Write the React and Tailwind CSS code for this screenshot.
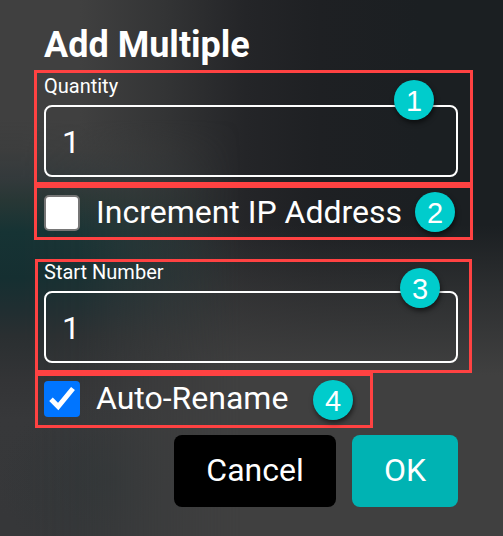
function Badge({ n, className }) {
  return (
    <span
      className={`flex size-10 items-center justify-center rounded-full bg-[#00cccc] pt-[2px] font-['Liberation_Sans',sans-serif] text-[29px] font-normal leading-none text-white shadow-[1px_3px_5px_rgba(0,0,0,0.55)] ${className}`}
    >
      {n}
    </span>
  );
}

function NumberField({ label, gap, badge, badgeClass }) {
  return (
    <label className={`relative flex flex-col ${gap}`}>
      <span className="text-[20px] leading-6">{label}</span>
      <input
        type="text"
        defaultValue="1"
        className="h-[72px] w-[414px] rounded-[8px] border-2 border-white bg-transparent px-4 pt-[2px] text-[32px] leading-none text-white outline-none"
      />
      <Badge n={badge} className={`absolute ${badgeClass}`} />
    </label>
  );
}

export default function App() {
  return (
    <main className="relative isolate h-[536px] w-[503px] overflow-hidden bg-[#404040] bg-[linear-gradient(to_bottom,transparent_225px,rgba(64,64,64,0.5)_295px,#404040_375px),linear-gradient(to_right,#404040_80px,#333435_165px,#242528_245px,#1e2023_320px,#1b1f22_420px)] font-['Roboto',sans-serif] text-[32px] text-white">
      <div className="absolute inset-0 -z-10 bg-[radial-gradient(ellipse_110px_90px_at_110px_480px,rgba(46,52,54,0.8),transparent),linear-gradient(to_bottom,rgba(64,64,64,0)_120px,rgba(58,60,60,0.6)_150px,#343a3c_177px,#283735_200px,#163334_232px,#152f31_278px,#202e31_310px,#2a2f31_336px,#333436_380px,#37383a_420px,#363739_520px)] [mask-image:linear-gradient(to_right,black_20px,rgba(0,0,0,0.88)_80px,rgba(0,0,0,0.45)_150px,transparent_240px)]" />
      <form className="flex flex-col">
        <h1 className="mt-[21px] ml-11 h-[49px] text-[36px] leading-[48px] font-bold">Add Multiple</h1>

        <section className="ml-[34px] h-[115px] w-[439px] border-3 border-[#ff4242] px-[7px] pt-px">
          <NumberField label="Quantity" gap="gap-[7px]" badge="1" badgeClass="left-[350px] top-[6px]" />
        </section>

        <section className="ml-[34px] flex h-[55px] w-[439px] items-start border-3 border-[#ff4242] pt-[7px] pl-[7px]">
          <label className="flex items-start">
            <input type="checkbox" className="size-9 appearance-none rounded-[5px] border-2 border-[#767676] bg-white" />
            <span className="ml-4 w-[319px] leading-[34px] whitespace-nowrap">Increment IP Address</span>
          </label>
          <Badge n="2" className="-mt-[3px] shrink-0" />
        </section>

        <section className="mt-[19px] ml-[35px] h-[114px] w-[437px] border-3 border-[#ff4242] px-[6px]">
          <NumberField label="Start Number" gap="-mt-[2px] gap-[7px]" badge="3" badgeClass="left-[356px] top-[8px]" />
        </section>

        <section className="ml-[35px] flex h-[55px] w-[338px] items-start border-3 border-[#ff4242] pt-[5px] pl-[6px]">
          <label className="flex items-start">
            <span className="flex size-9 rounded-[4px] bg-[#0075ff]">
              <svg viewBox="0 0 36 36" className="size-9" fill="none" stroke="white" strokeWidth="5">
                <path d="M7 18.2 L14.2 25.5 L29 7.5" />
              </svg>
            </span>
            <span className="ml-4 w-[217px] leading-[34px] whitespace-nowrap">Auto-Rename</span>
          </label>
          <Badge n="4" className="-mt-px shrink-0" />
        </section>

        <footer className="mt-[7px] mr-[45px] flex justify-end gap-4">
          <button type="button" className="h-[72px] w-[162px] rounded-[8px] bg-black pb-[2px]">Cancel</button>
          <button type="button" className="h-[72px] w-[106px] rounded-[8px] bg-[#00b3b3] pb-[2px]">OK</button>
        </footer>
      </form>
    </main>
  );
}
